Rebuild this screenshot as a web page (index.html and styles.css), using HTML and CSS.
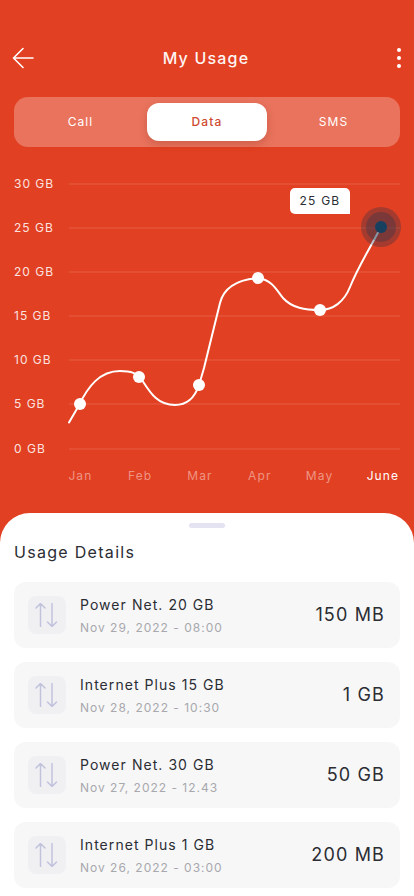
FILE: index.html
```html
<!DOCTYPE html>
<html lang="en">
<head>
<meta charset="utf-8">
<title>My Usage</title>
<link rel="stylesheet" href="styles.css">
</head>
<body>
<div class="screen">
  <header class="topbar">
    <span class="side"><svg class="back" width="24" height="24" viewBox="0 0 24 24" fill="none" stroke="#fff" stroke-width="1.6" stroke-linecap="round" stroke-linejoin="round"><path d="M2.500 12H21M11 2.500L1.500 12l9.500 9.500"/></svg></span>
    <h1 class="title">My Usage</h1>
    <span class="side side-end"><span class="dots"><i></i><i></i><i></i></span></span>
  </header>
  <nav class="tabs">
    <span class="tab">Call</span>
    <span class="tab tab-active">Data</span>
    <span class="tab">SMS</span>
  </nav>
  <section class="chart">
    <div class="rows">
      <div class="row"><span class="ylabel">30 GB</span><span class="grid"></span></div>
      <div class="row"><span class="ylabel">25 GB</span><span class="grid"></span></div>
      <div class="row"><span class="ylabel">20 GB</span><span class="grid"></span></div>
      <div class="row"><span class="ylabel">15 GB</span><span class="grid"></span></div>
      <div class="row"><span class="ylabel">10 GB</span><span class="grid"></span></div>
      <div class="row"><span class="ylabel">5 GB</span><span class="grid"></span></div>
      <div class="row"><span class="ylabel">0 GB</span><span class="grid"></span></div>
    </div>
    <div class="months">
      <span>Jan</span><span>Feb</span><span>Mar</span><span>Apr</span><span>May</span><span class="month-active">June</span>
    </div>
    <svg class="plot" width="414" height="320" viewBox="0 170 414 320" fill="none">
      <path d="M69 422.500L78 407C88 386 100 371 120 371C131 371 137 373 142 380C151 394 158 405 175 405C187 405 195 397 199 385L204 368L220 303C223 291 232 280 258 278C272 280 276 289 283 298C292 308 305 310 320 310C333 310 344 302 350 287C358 267 370 248 381 227" stroke="#fff" stroke-width="2" stroke-linecap="round" stroke-linejoin="round"/>
      <circle cx="80" cy="404" r="6" fill="#fff"/>
      <circle cx="139" cy="377" r="6" fill="#fff"/>
      <circle cx="199" cy="385" r="6" fill="#fff"/>
      <circle cx="258" cy="278" r="6" fill="#fff"/>
      <circle cx="320" cy="310" r="6" fill="#fff"/>
      <circle cx="381" cy="227" r="20" fill="#16324f" fill-opacity=".3"/>
      <circle cx="381" cy="227" r="15" fill="#16324f" fill-opacity=".3"/>
      <circle cx="381" cy="227" r="6" fill="#17405f"/>
    </svg>
    <div class="tooltip">25 GB</div>
  </section>
  <section class="sheet">
    <div class="handle"></div>
    <h2 class="sheet-title">Usage Details</h2>
    <ul class="list">
      <li class="card">
        <span class="icon"><svg width="24" height="24" viewBox="0 0 24 24" fill="none" stroke="#c1c2dc" stroke-width="1.500" stroke-linecap="round" stroke-linejoin="round"><path d="M5.500 23.500V.5M1 5L5.500.5 10 5M17 .5v23M12.500 19l4.500 4.500 4.500-4.500"/></svg></span>
        <div class="info"><div class="name">Power Net. 20 GB</div><div class="date">Nov 29, 2022 - 08:00</div></div>
        <div class="amount">150 MB</div>
      </li>
      <li class="card">
        <span class="icon"><svg width="24" height="24" viewBox="0 0 24 24" fill="none" stroke="#c1c2dc" stroke-width="1.500" stroke-linecap="round" stroke-linejoin="round"><path d="M5.500 23.500V.5M1 5L5.500.5 10 5M17 .5v23M12.500 19l4.500 4.500 4.500-4.500"/></svg></span>
        <div class="info"><div class="name">Internet Plus 15 GB</div><div class="date">Nov 28, 2022 - 10:30</div></div>
        <div class="amount">1 GB</div>
      </li>
      <li class="card">
        <span class="icon"><svg width="24" height="24" viewBox="0 0 24 24" fill="none" stroke="#c1c2dc" stroke-width="1.500" stroke-linecap="round" stroke-linejoin="round"><path d="M5.500 23.500V.5M1 5L5.500.5 10 5M17 .5v23M12.500 19l4.500 4.500 4.500-4.500"/></svg></span>
        <div class="info"><div class="name">Power Net. 30 GB</div><div class="date">Nov 27, 2022 - 12.43</div></div>
        <div class="amount">50 GB</div>
      </li>
      <li class="card">
        <span class="icon"><svg width="24" height="24" viewBox="0 0 24 24" fill="none" stroke="#c1c2dc" stroke-width="1.500" stroke-linecap="round" stroke-linejoin="round"><path d="M5.500 23.500V.5M1 5L5.500.5 10 5M17 .5v23M12.500 19l4.500 4.500 4.500-4.500"/></svg></span>
        <div class="info"><div class="name">Internet Plus 1 GB</div><div class="date">Nov 26, 2022 - 03:00</div></div>
        <div class="amount">200 MB</div>
      </li>
    </ul>
  </section>
</div>
</body>
</html>
```
FILE: styles.css
```css
* { box-sizing: border-box; }
html, body { margin: 0; padding: 0; }
body { font-family: Inter, "Liberation Sans", sans-serif; background: #e24022; }
.screen { width: 414px; height: 896px; overflow: hidden; display: flex; flex-direction: column; background: #e24022; position: relative; }

.topbar { height: 97px; padding: 45px 14px 0 12px; display: flex; align-items: flex-start; justify-content: space-between; }
.side { width: 40px; display: flex; }
.side-end { justify-content: flex-end; }
.back { display: block; margin-top: 1px; }
.title { margin: 4px 0 0; font-size: 16px; line-height: 18px; font-weight: 500; letter-spacing: 1.2px; color: #fff; opacity: .95; }
.dots { display: flex; flex-direction: column; gap: 4px; width: 4px; margin-top: 3px; margin-right: -1px; }
.dots i { display: block; width: 4px; height: 4px; border-radius: 50%; background: #fff; }

.tabs { margin: 0 14px; height: 50px; border-radius: 14px; background: rgba(255,255,255,.27); display: flex; align-items: center; justify-content: space-between; padding: 0 6.500px; }
.tab { width: 120px; height: 38px; line-height: 38px; text-align: center; font-size: 12px; font-weight: 400; letter-spacing: 1.1px; color: #fff; }
.tab-active { background: #fff; color: #cf4a30; border-radius: 12px; font-weight: 500; box-shadow: 0 3px 8px rgba(120,30,10,.25); }

.chart { position: relative; height: 366px; padding: 30px 14px 0; }
.rows { display: flex; flex-direction: column; gap: 30.100px; }
.row { height: 14px; display: flex; align-items: center; }
.ylabel { width: 55px; font-size: 12px; line-height: 14px; letter-spacing: 1px; color: #fff; opacity: .85; white-space: nowrap; }
.grid { flex: 1; height: 2px; background: rgba(255,255,255,.08); }
.months { position: absolute; left: 50.500px; right: 0; top: 322px; display: flex; }
.months span { width: 59.800px; text-align: center; font-size: 12px; line-height: 14px; letter-spacing: 1.1px; color: rgba(255,255,255,.45); }
.months .month-active { color: #fff; margin-left: 3.500px; }
.plot { position: absolute; left: 0; top: 23px; }
.tooltip { position: absolute; left: 290px; top: 41px; width: 60px; height: 26px; background: #fff; border-radius: 5px 5px 0 5px; color: #2b2d33; font-size: 12px; line-height: 26px; letter-spacing: 1.2px; text-align: center; }

.sheet { position: absolute; left: 0; right: 0; top: 513px; bottom: 0; background: #fff; border-radius: 30px 30px 0 0; padding: 10px 14px 0; }
.handle { width: 36px; height: 5px; border-radius: 3px; background: #e3e3f2; margin: 0 auto; }
.sheet-title { margin: 14px 0 0; font-size: 16px; line-height: 20px; font-weight: 400; letter-spacing: 1.3px; color: #2b2d33; }
.list { list-style: none; margin: 20px 0 0; padding: 0; display: flex; flex-direction: column; gap: 14px; }
.card { height: 66px; border-radius: 12px; background: #f7f7f8; padding: 0 15px 0 14px; display: flex; align-items: center; }
.icon { width: 38px; height: 38px; border-radius: 8px; background: #f0f0f3; display: flex; align-items: center; justify-content: center; }
.info { flex: 1; margin-left: 14px; }
.name { font-size: 14px; line-height: 18px; font-weight: 400; letter-spacing: 1.05px; color: #2b2d33; }
.date { margin-top: 6px; font-size: 12px; line-height: 15px; letter-spacing: 1px; color: #a8a8ad; }
.amount { font-size: 18px; line-height: 22px; letter-spacing: 1.15px; color: #2b2d33; }
```
